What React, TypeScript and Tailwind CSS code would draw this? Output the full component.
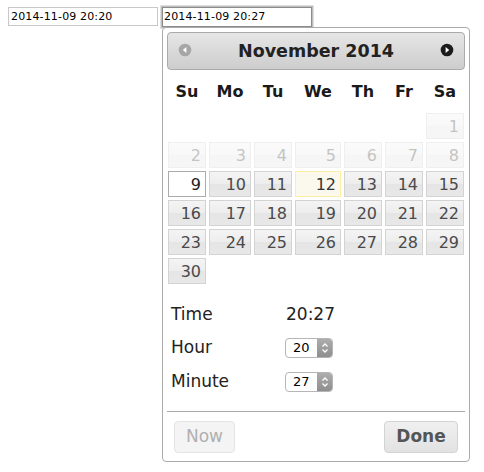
import React from 'react';

type DayState = 'default' | 'disabled' | 'active' | 'today' | 'empty';

interface Day {
  label: string;
  state: DayState;
}

const weekdays = ['Su', 'Mo', 'Tu', 'We', 'Th', 'Fr', 'Sa'];

const buildWeeks = (): Day[][] => {
  const cells: Day[] = [];
  for (let i = 0; i < 6; i++) cells.push({ label: '', state: 'empty' });
  for (let d = 1; d <= 30; d++) {
    let state: DayState = 'default';
    if (d < 9) state = 'disabled';
    if (d === 9) state = 'active';
    if (d === 12) state = 'today';
    cells.push({ label: String(d), state });
  }
  while (cells.length % 7 !== 0) cells.push({ label: '', state: 'empty' });
  const weeks: Day[][] = [];
  for (let i = 0; i < cells.length; i += 7) weeks.push(cells.slice(i, i + 7));
  return weeks;
};

const dayClass: Record<DayState, string> = {
  default:
    'border-[#d3d3d3] text-[#4a4a4a] bg-[linear-gradient(#f4f4f4_0%,#ededed_50%,#e5e5e5_52%,#e8e8e8_100%)]',
  disabled:
    'border-[#d3d3d3] text-[#555] opacity-35 bg-[linear-gradient(#f4f4f4_0%,#ededed_50%,#e5e5e5_52%,#e8e8e8_100%)]',
  active: 'border-[#aaaaaa] bg-white text-[#212121]',
  today: 'border-[#fcefa1] bg-[#fbf9ee] text-[#363636]',
  empty: 'border-transparent',
};

const cols = 'grid grid-cols-[38px_42px_38px_46px_38px_38px_38px] gap-x-[3px]';

const CircleArrow: React.FC<{ dir: 'w' | 'e'; color: string }> = ({ dir, color }) => (
  <svg width="16" height="16" viewBox="0 0 16 16" className="shrink-0">
    <circle cx="8" cy="8" r="6.3" fill={color} />
    <polygon
      points={dir === 'e' ? '6.6,5 10.2,8 6.6,11' : '9.4,5 5.8,8 9.4,11'}
      fill="#ffffff"
    />
  </svg>
);

const Stepper: React.FC<{ value: string }> = ({ value }) => (
  <div className="flex h-[20px] w-[48px] overflow-hidden rounded-[4px] border border-[#b5b5b5] bg-white">
    <div className="flex-1 pl-[7px] text-[13px] leading-[18px] text-black">{value}</div>
    <div className="flex w-[15px] items-center justify-center bg-[linear-gradient(#adadad,#8e8e8e)]">
      <svg width="8" height="12" viewBox="0 0 8 12">
        <polyline points="1.5,4.5 4,2 6.5,4.5" fill="none" stroke="#fff" strokeWidth="1.3" />
        <polyline points="1.5,7.5 4,10 6.5,7.5" fill="none" stroke="#fff" strokeWidth="1.3" />
      </svg>
    </div>
  </div>
);

export default function App() {
  const weeks = buildWeeks();

  return (
    <div className="relative h-[472px] w-[484px] bg-white font-['DejaVu_Sans',sans-serif]">
      <div className="flex gap-[4px] pl-[8px] pt-[7px]">
        <div className="h-[19px] w-[150px] border border-[#c8c8c8] pl-[2px] text-[11px] leading-[17px] tracking-[0.15px] text-black">
          2014-11-09 20:20
        </div>
        <div className="h-[20px] w-[150px] border border-[#8c8c8c] pl-[1px] text-[11px] leading-[18px] tracking-[0.15px] text-black shadow-[0_0_0_1.5px_#bdbdbd]">
          2014-11-09 20:27
        </div>
      </div>

      <div className="absolute left-[162px] top-[27px] w-[308px] rounded-[4px] border border-[#aaaaaa] bg-white px-[4px] pb-[8px] pt-[4px]">
        <div className="flex h-[38px] items-center justify-between rounded-[4px] border border-[#aaaaaa] bg-[linear-gradient(#e6e6e6,#cdcdcd)] px-[9px]">
          <div className="mb-[3px]">
            <CircleArrow dir="w" color="#a6a6a6" />
          </div>
          <div className="flex-1 text-center text-[17.5px] font-bold leading-[22px] text-[#222]">
            November 2014
          </div>
          <div className="mb-[3px]">
            <CircleArrow dir="e" color="#1c1c1c" />
          </div>
        </div>

        <div className="px-[1px]">
          <div className={`${cols} h-[43px] items-center`}>
            {weekdays.map((w) => (
              <div key={w} className="pt-[1px] text-center text-[16px] font-bold text-[#1a1a1a]">
                {w}
              </div>
            ))}
          </div>

          <div className="flex flex-col gap-y-[3px]">
            {weeks.map((week, i) => (
              <div key={i} className={cols}>
                {week.map((day, j) => (
                  <div
                    key={j}
                    className={`h-[26px] border pr-[4px] pt-[2px] text-right text-[16px] leading-[22px] ${dayClass[day.state]}`}
                  >
                    {day.label}
                  </div>
                ))}
              </div>
            ))}
          </div>
        </div>

        <div className="pl-[4px] text-[17px] text-[#222]">
          <div className="mt-[20px] flex h-[21px] items-center">
            <div className="w-[114px]">Time</div>
            <div className="pl-[1px]">20:27</div>
          </div>
          <div className="mt-[12px] flex h-[21px] items-center">
            <div className="w-[114px]">Hour</div>
            <Stepper value="20" />
          </div>
          <div className="mt-[13px] flex h-[21px] items-center">
            <div className="w-[114px]">Minute</div>
            <Stepper value="27" />
          </div>
        </div>

        <div className="mt-[19px] flex justify-between border-t border-[#aaaaaa] px-[7px] pt-[9px]">
          <div className="flex h-[32px] w-[61px] items-center justify-center rounded-[4px] border border-[#e4e4e4] bg-[#f4f4f4] text-[17px] text-[#b0b0b0]">
            Now
          </div>
          <div className="flex h-[32px] w-[74px] items-center justify-center rounded-[4px] border border-[#d3d3d3] bg-[linear-gradient(#f0f0f0,#e2e2e2)] text-[17px] font-bold text-[#555]">
            Done
          </div>
        </div>
      </div>
    </div>
  );
}
